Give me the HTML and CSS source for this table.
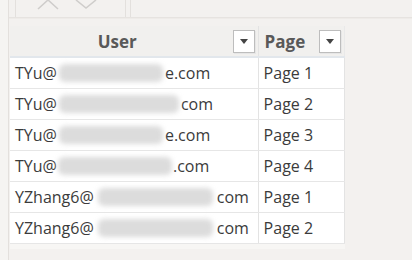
FILE: index.html
```html
<!DOCTYPE html>
<html>
<head>
<meta charset="utf-8">
<link rel="stylesheet" href="styles.css">
</head>
<body>
<div class="page">
  <div class="gutter"></div>
  <div class="main">
    <div class="toolbar">
      <div class="nav">
        <svg class="chev" width="24" height="10" viewBox="0 0 24 10"><path d="M2 9 L12 0 L22 9" fill="none" stroke="#cfcdcb" stroke-width="1.6"/></svg>
        <svg class="chev" width="24" height="10" viewBox="0 0 24 10"><path d="M2 0 L12 8 L22 0" fill="none" stroke="#cfcdcb" stroke-width="1.6"/></svg>
      </div>
      <div class="nav2"></div>
    </div>
    <table class="grid">
      <thead>
        <tr>
          <th class="c-user"><div class="hcell"><span class="htext">User</span><span class="dd"><svg width="8" height="5" viewBox="0 0 8 5"><path d="M0 0 H8 L4 5 Z" fill="#444"/></svg></span></div></th>
          <th class="c-page"><div class="hcell"><span class="htext left">Page</span><span class="dd"><svg width="8" height="5" viewBox="0 0 8 5"><path d="M0 0 H8 L4 5 Z" fill="#444"/></svg></span></div></th>
        </tr>
      </thead>
      <tbody>
        <tr><td>TYu@<span class="blur w1"></span><span class="tail">e.com</span></td><td>Page 1</td></tr>
        <tr><td>TYu@<span class="blur w2"></span><span class="tail">com</span></td><td>Page 2</td></tr>
        <tr><td>TYu@<span class="blur w1"></span><span class="tail">e.com</span></td><td>Page 3</td></tr>
        <tr><td>TYu@<span class="blur w3"></span><span class="tail">.com</span></td><td>Page 4</td></tr>
        <tr><td>YZhang6@<span class="blur w4"></span><span class="tail">com</span></td><td>Page 1</td></tr>
        <tr><td>YZhang6@<span class="blur w4"></span><span class="tail">com</span></td><td>Page 2</td></tr>
      </tbody>
    </table>
    <div class="foot"></div>
  </div>
</div>
</body>
</html>
```
FILE: styles.css
```css
html, body {
  margin: 0;
  padding: 0;
  background: #f3f1ef;
  width: 412px;
  height: 260px;
  overflow: hidden;
  font-family: "Open Sans", "Noto Sans", sans-serif;
}
.page {
  display: flex;
  height: 260px;
}
.gutter {
  width: 8px;
  background: #f5f4f2;
  border-right: 1px solid #e3e0dd;
  flex: none;
}
.main {
  flex: 1;
  display: flex;
  flex-direction: column;
}
.toolbar {
  height: 17px;
  display: flex;
  border-bottom: 1px solid #e6e3e0;
  box-shadow: 0 1px 0 #eeebe8;
}
.nav {
  margin-left: 6px;
  width: 111px;
  border-left: 1px solid #e3e0dd;
  border-right: 1px solid #e3e0dd;
  display: flex;
  gap: 14px;
  padding-left: 20px;
  box-sizing: border-box;
  align-items: flex-start;
}
.chev { display: block; }
.nav2 {
  width: 4px;
  border-right: 1px solid #e3e0dd;
}
.grid {
  margin-top: 8px;
  margin-left: 1px;
  border-collapse: collapse;
  width: 335px;
  background: #ffffff;
  color: #3b3b3b;
  font-size: 16px;
}
.grid th {
  background: #f1f0ee;
  height: 30px;
  padding: 0;
  border-bottom: 2px solid #e2e7ec;
  border-right: 1px solid #e3e3e3;
}
.grid th:last-child { border-right: 1px solid #e9e9e9; }
.hcell {
  display: flex;
  align-items: center;
  height: 30px;
  padding: 0 3px 0 6px;
}
.htext {
  flex: 1;
  text-align: center;
  font-weight: 700;
  color: #595959;
  font-size: 17px;
  padding-right: 14px;
}
.htext.left { text-align: left; padding-right: 0; }
.dd {
  width: 20px;
  height: 21px;
  border: 1px solid #bdbdbd;
  background: #fff;
  display: flex;
  align-items: center;
  justify-content: center;
  box-shadow: 1px 1px 0 #e6e6e6;
}
.dd svg { display: block; }
.c-user { width: 248px; }
.c-page { width: 86px; }
.grid td {
  height: 30px;
  padding: 0 0 0 5px;
  border-bottom: 1px solid #e6e6e6;
  border-right: 1px solid #e3e3e3;
  white-space: nowrap;
  line-height: 20px;
}
.blur {
  display: inline-block;
  height: 18px;
  vertical-align: -3px;
  background: #dcdcdc;
  filter: blur(2.5px);
  border-radius: 6px;
}
.w1 { width: 104px; margin: 0 2px 0 2px; }
.w2 { width: 120px; margin: 0 2px; }
.w3 { width: 114px; margin: 0 1px; }
.w4 { width: 115px; margin: 0 4px; }
.foot {
  height: 5px;
  width: 335px;
  margin-left: 1px;
  background: #f7f6f4;
}
```
